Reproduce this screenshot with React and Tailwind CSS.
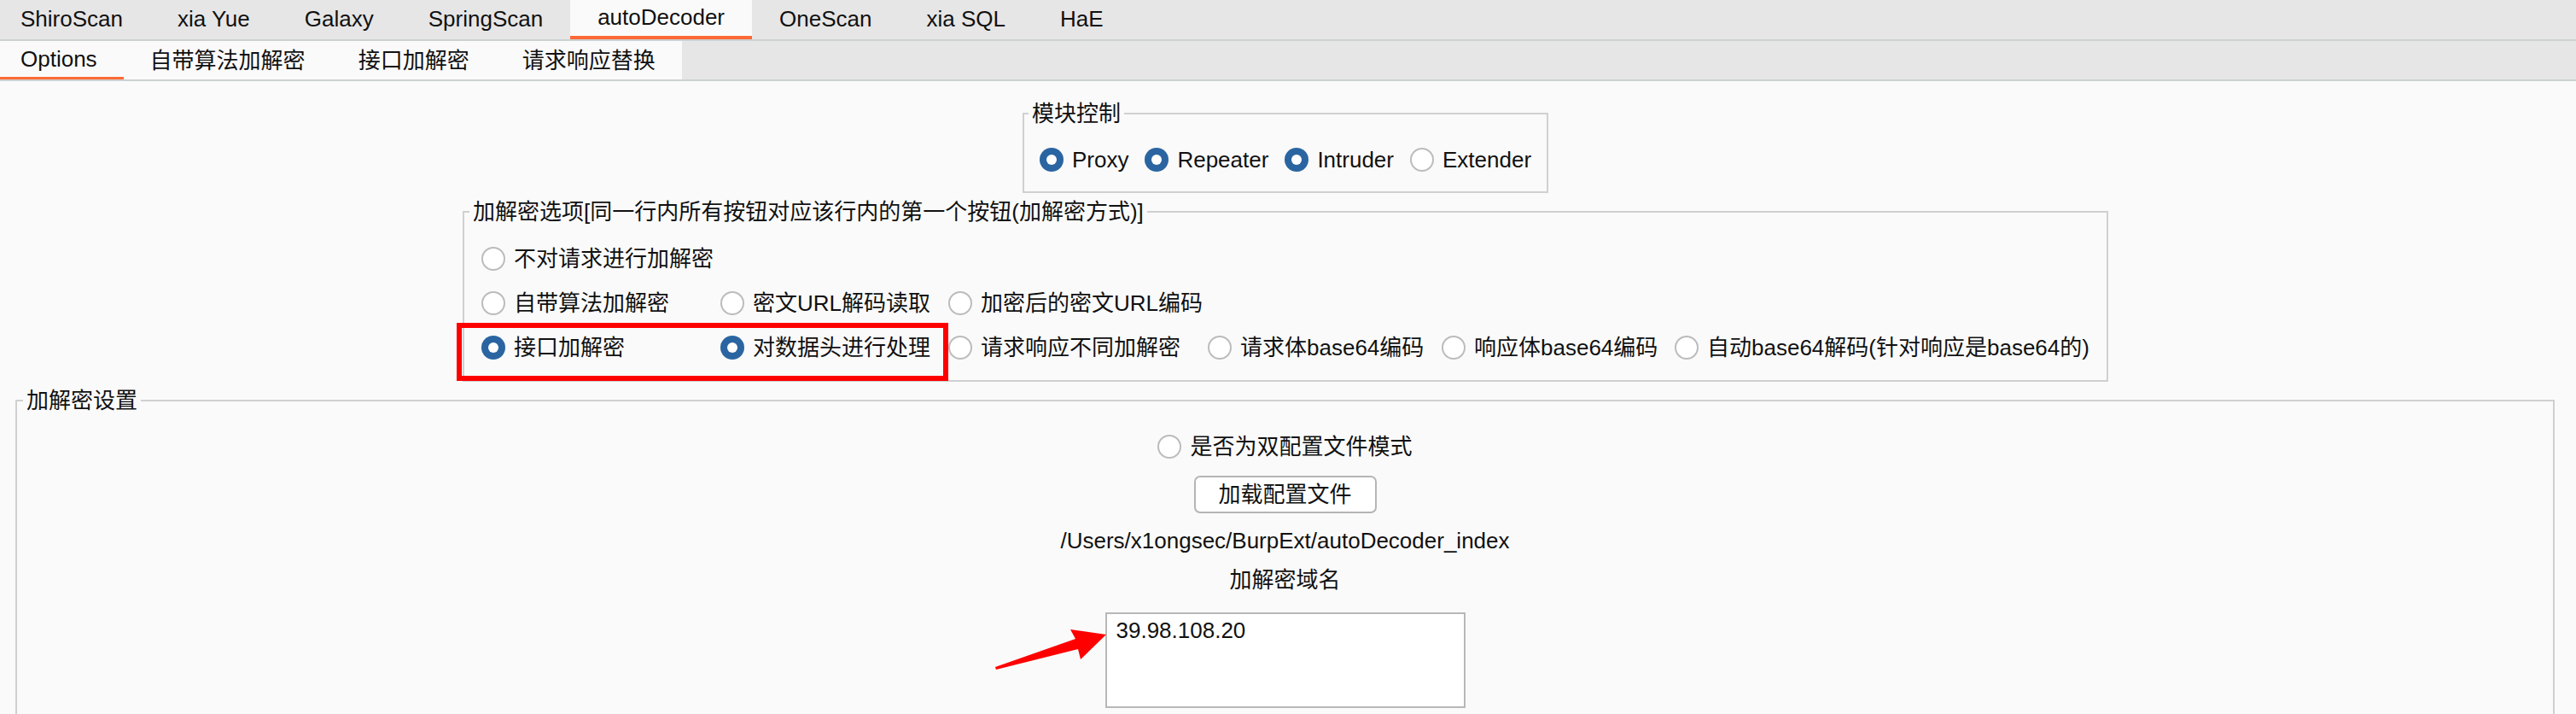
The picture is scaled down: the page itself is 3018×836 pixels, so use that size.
import React from "react";

const topTabs = ["ShiroScan", "xia Yue", "Galaxy", "SpringScan", "autoDecoder", "OneScan", "xia SQL", "HaE"];
const subTabs = ["Options", "自带算法加解密", "接口加解密", "请求响应替换"];

function Radio({ checked }) {
  if (checked) {
    return (
      <span className="w-[28px] h-[28px] rounded-full bg-[#2a65a1] flex items-center justify-center shrink-0">
        <span className="w-[12px] h-[12px] rounded-full bg-white" />
      </span>
    );
  }
  return <span className="w-[28px] h-[28px] rounded-full border-2 border-[#bcbcbc] bg-white shrink-0" />;
}

function Option({ label, checked, className = "" }) {
  return (
    <div className={"flex items-center gap-[10px] h-[30px] whitespace-nowrap " + className}>
      <Radio checked={checked} />
      <span>{label}</span>
    </div>
  );
}

export default function App() {
  return (
    <div className="w-[3018px] h-[836px] overflow-hidden bg-[#fafafa] text-[#111] text-[26px] leading-[30px] font-['Liberation_Sans','Noto_Sans_CJK_SC',sans-serif]">
      {/* top tabs */}
      <div className="h-[48px] bg-[#e6e6e6] border-b-2 border-[#cdd1d1] flex">
        <div className="flex -ml-[8px]">
          {topTabs.map((t) => (
            <div
              key={t}
              className={
                "h-[46px] px-[32px] flex items-center pb-[2px] " +
                (t === "autoDecoder" ? "bg-[#fafafa] border-b-4 border-[#fd6a35]" : "")
              }
            >
              {t}
            </div>
          ))}
        </div>
      </div>

      {/* sub tabs */}
      <div className="h-[47px] bg-[#e6e6e6] border-b-2 border-[#cdd1d1] flex">
        <div className="flex bg-[#fafafa]">
          {subTabs.map((t, i) => (
            <div
              key={t}
              className={
                "h-[45px] flex items-center " +
                (i === 0 ? "pl-[24px] pr-[31px] border-b-[3px] border-[#fd6a35]" : "px-[31px]")
              }
            >
              {t}
            </div>
          ))}
        </div>
      </div>

      {/* content */}
      <div className="w-[3012px] flex flex-col items-center pt-[23px]">
        {/* 模块控制 */}
        <fieldset className="border-2 border-[#d0d0d0] pb-[22px]">
          <legend className="ml-[5px] px-[4px]">模块控制</legend>
          <div className="flex gap-[19px] ml-[18px] mr-[18px] mt-[24px]">
            <Option label="Proxy" checked />
            <Option label="Repeater" checked />
            <Option label="Intruder" checked />
            <Option label="Extender" />
          </div>
        </fieldset>

        {/* 加解密选项 */}
        <fieldset className="border-2 border-[#d0d0d0] pb-[23px] mt-[7px]">
          <legend className="ml-[6px] px-[4px]">加解密选项[同一行内所有按钮对应该行内的第一个按钮(加解密方式)]</legend>
          <div className="relative ml-[20px] mr-[20px] mt-[25px]">
            <div className="grid grid-cols-[280px_267px_304px_274px_273px_auto] gap-y-[22px]">
              <Option label="不对请求进行加解密" className="col-span-6" />
              <Option label="自带算法加解密" className="col-start-1" />
              <Option label="密文URL解码读取" />
              <Option label="加密后的密文URL编码" />
              <Option label="接口加解密" checked className="col-start-1" />
              <Option label="对数据头进行处理" checked />
              <Option label="请求响应不同加解密" />
              <Option label="请求体base64编码" />
              <Option label="响应体base64编码" />
              <Option label="自动base64解码(针对响应是base64的)" />
            </div>
            {/* annotation box */}
            <div className="absolute left-[-29px] top-[90px] w-[576px] h-[68px] border-[6px] border-[#ff0000]" />
          </div>
        </fieldset>

        {/* 加解密设置 */}
        <fieldset className="self-stretch ml-[18px] mr-[19px] mt-[7px] border-2 border-[#d0d0d0] h-[600px]">
          <legend className="ml-[7px] px-[4px]">加解密设置</legend>
          <div className="flex flex-col items-center">
            <Option label="是否为双配置文件模式" className="mt-[24px]" />
            <button className="mt-[19px] w-[214px] h-[44px] border-2 border-[#b5b5b5] rounded-[7px] bg-white flex items-center justify-center">
              加载配置文件
            </button>
            <div className="mt-[17px]">/Users/x1ongsec/BurpExt/autoDecoder_index</div>
            <div className="mt-[16px]">加解密域名</div>
            <div className="relative mt-[23px]">
              <textarea
                readOnly
                defaultValue="39.98.108.20"
                className="block w-[422px] h-[112px] border-2 border-[#b8b8b8] bg-white pl-[11px] pt-[4px] resize-none outline-none"
              />
              <svg
                className="absolute left-[-145px] top-[8px]"
                width="160"
                height="70"
                viewBox="0 0 160 70"
              >
                <polygon
                  points="16,56 110,23 104,12 146,18 116,47 113,35 17,59"
                  fill="#ff0000"
                />
              </svg>
            </div>
          </div>
        </fieldset>
      </div>
    </div>
  );
}
